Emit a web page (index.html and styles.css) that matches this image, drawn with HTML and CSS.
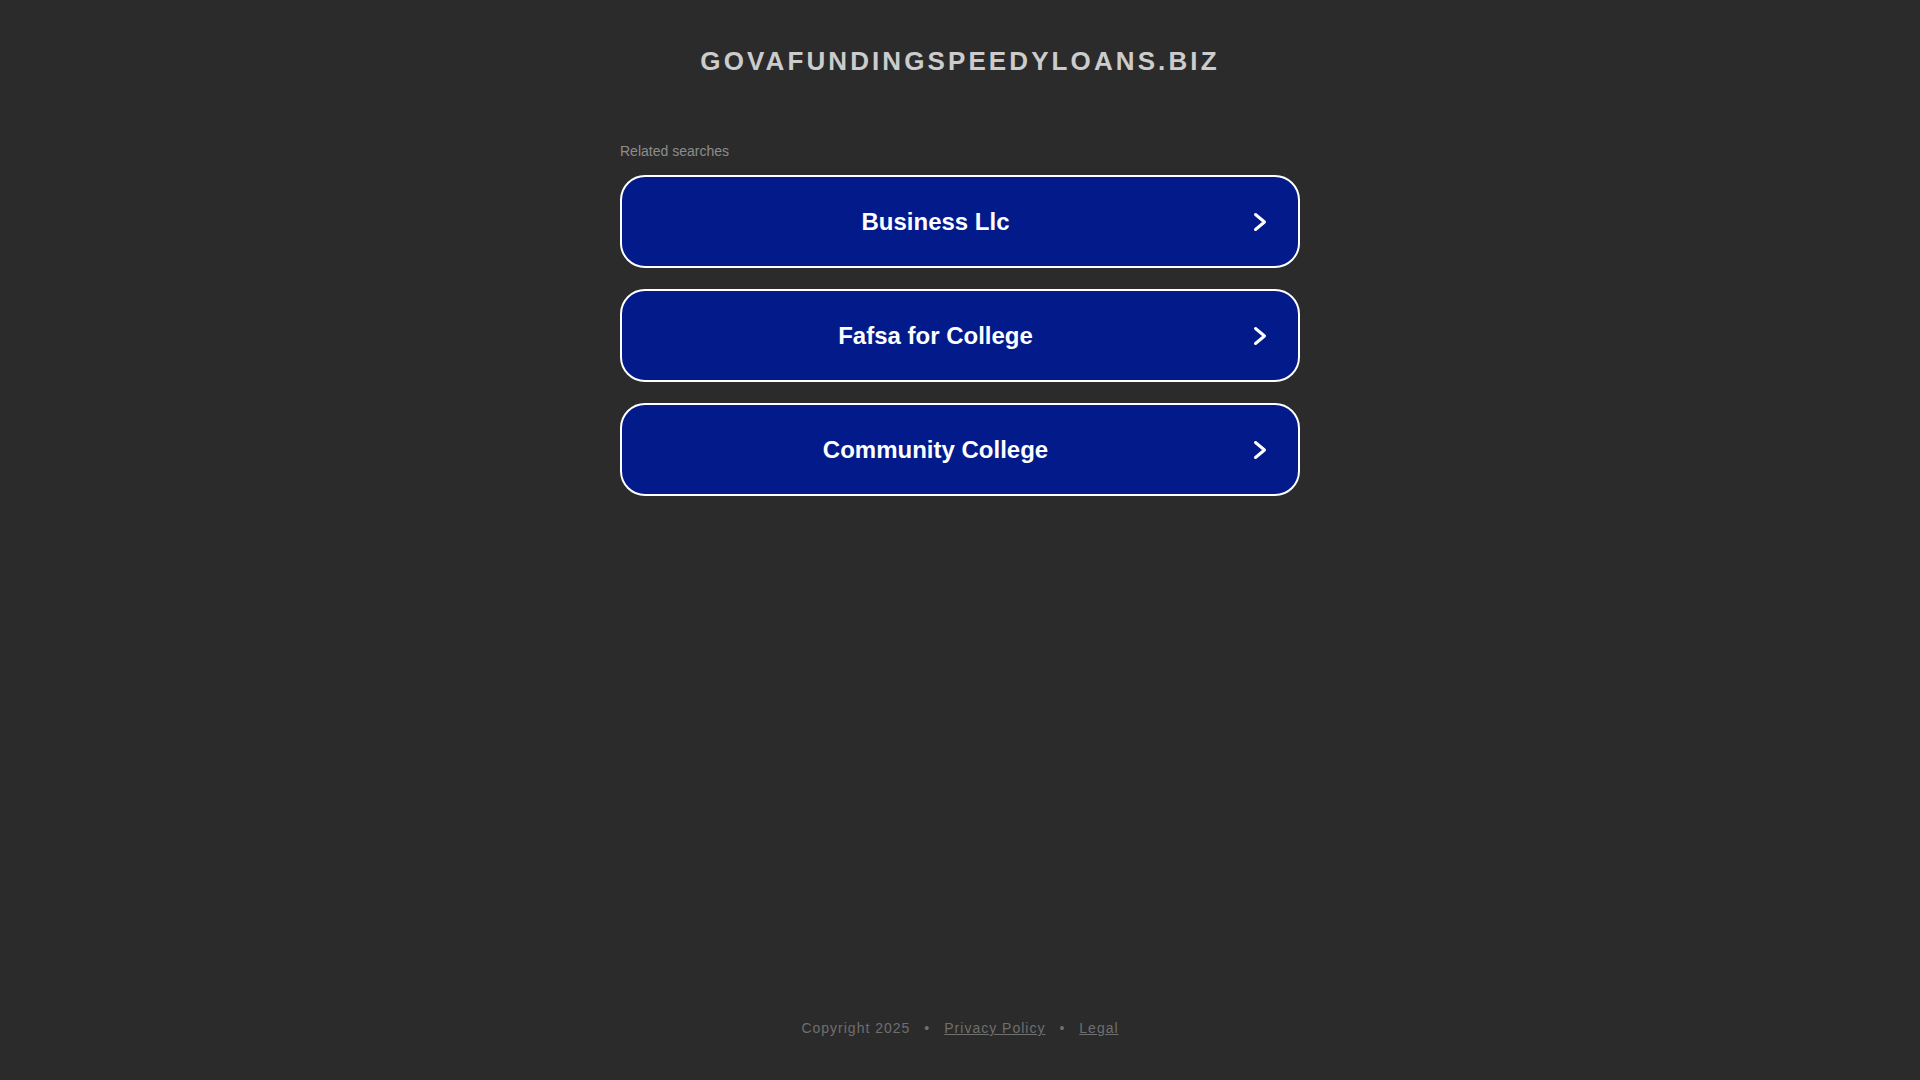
FILE: index.html
```html
<!DOCTYPE html>
<html lang="en">
<head>
<meta charset="utf-8">
<title>govafundingspeedyloans.biz</title>
<link rel="stylesheet" href="styles.css">
</head>
<body>
<div class="page">
  <header class="header">
    <h1 class="domain">govafundingspeedyloans.biz</h1>
  </header>
  <main class="main">
    <div class="related">
      <p class="related-title">Related searches</p>
      <ul class="list">
        <li><a class="item" href="#"><span class="item-text">Business Llc</span><svg class="chev" width="20" height="24" viewBox="0 0 20 24"><path d="M5.5 4.5 L14.5 12 L5.5 19.5" fill="none" stroke="#fff" stroke-width="3" stroke-linecap="round" stroke-linejoin="round"/></svg></a></li>
        <li><a class="item" href="#"><span class="item-text">Fafsa for College</span><svg class="chev" width="20" height="24" viewBox="0 0 20 24"><path d="M5.5 4.5 L14.5 12 L5.5 19.5" fill="none" stroke="#fff" stroke-width="3" stroke-linecap="round" stroke-linejoin="round"/></svg></a></li>
        <li><a class="item" href="#"><span class="item-text">Community College</span><svg class="chev" width="20" height="24" viewBox="0 0 20 24"><path d="M5.5 4.5 L14.5 12 L5.5 19.5" fill="none" stroke="#fff" stroke-width="3" stroke-linecap="round" stroke-linejoin="round"/></svg></a></li>
      </ul>
    </div>
  </main>
  <footer class="footer">
    <span>Copyright 2025</span>
    <span class="sep">•</span>
    <a href="#" class="flink">Privacy Policy</a>
    <span class="sep">•</span>
    <a href="#" class="flink">Legal</a>
  </footer>
</div>
</body>
</html>
```
FILE: styles.css
```css
html, body {
  margin: 0;
  padding: 0;
  height: 100%;
}
body {
  background: #2b2b2b;
  font-family: "Liberation Sans", Arial, sans-serif;
}
.page {
  min-height: 100%;
  display: flex;
  flex-direction: column;
}
.header {
  padding-top: 46px;
  text-align: center;
}
.domain {
  margin: 0;
  font-size: 26px;
  line-height: 30px;
  font-weight: bold;
  text-transform: uppercase;
  letter-spacing: 3.1px;
  color: #cccccc;
}
.main {
  flex: 1;
  display: flex;
  justify-content: center;
}
.related {
  width: 680px;
  margin-top: 67px;
}
.related-title {
  margin: 0 0 16px;
  font-size: 14px;
  line-height: 16px;
  color: #8d8d8d;
}
.list {
  list-style: none;
  margin: 0;
  padding: 0;
  display: flex;
  flex-direction: column;
  gap: 21px;
}
.item {
  box-sizing: border-box;
  height: 93px;
  display: flex;
  align-items: center;
  padding: 0 28px 0 30px;
  background: #021a8a;
  border: 2px solid #fff;
  border-radius: 25px;
  color: #fff;
  text-decoration: none;
}
.item-text {
  flex: 1;
  text-align: center;
  font-size: 24px;
  font-weight: bold;
}
.chev {
  margin-left: 31px;
  flex: none;
}
.footer {
  display: flex;
  justify-content: center;
  gap: 14px;
  padding-bottom: 44px;
  font-size: 14px;
  line-height: 16px;
  letter-spacing: 1px;
  color: #6f6f6f;
}
.flink {
  color: #6f6f6f;
  text-decoration: underline;
}
```
